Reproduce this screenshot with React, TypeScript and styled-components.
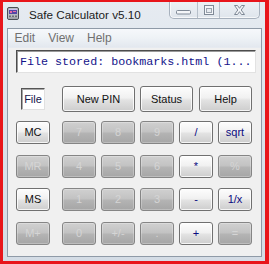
import React from "react";
import styled, { createGlobalStyle } from "styled-components";

const Global = createGlobalStyle`
  html, body { margin: 0; padding: 0; background: #ffffff; }
  body { width: 269px; height: 264px; overflow: hidden; }
`;

const Window = styled.div`
  width: 269px;
  height: 264px;
  box-sizing: border-box;
  background: #e8151b;
  padding: 2px 4px 3px 3px;
  display: flex;
`;

const Frame = styled.div`
  flex: 1;
  min-width: 0;
  display: flex;
  flex-direction: column;
  background: linear-gradient(180deg, #e6ebf1 0%, #dbe2ea 45%, #d4dce5 100%);
  padding: 0 3px 4px 4px;
`;

const TitleBar = styled.div`
  height: 26px;
  flex-shrink: 0;
  display: flex;
  align-items: flex-start;
`;

const AppIcon = styled.svg`
  margin-top: 5px;
  flex-shrink: 0;
`;

const Title = styled.div`
  margin: 5px 0 0 10px;
  font-family: "Liberation Sans", Arial, sans-serif;
  font-size: 11.7px;
  line-height: 15px;
  color: #1b1b1b;
  white-space: nowrap;
`;

const Caption = styled.div`
  margin-left: auto;
  margin-right: 2px;
  display: flex;
  height: 16px;
  border: 1px solid #a7b1bd;
  border-top: none;
  border-radius: 0 0 5px 5px;
  background: linear-gradient(180deg, #edf1f5 0%, #dfe5ec 100%);
  box-shadow: inset 1px 0 0 rgba(255, 255, 255, 0.7), inset 0 -1px 0 rgba(255, 255, 255, 0.7);
`;

const CapBtn = styled.div<{ $w: number; $pt?: number }>`
  width: ${(p) => p.$w}px;
  display: flex;
  align-items: center;
  justify-content: center;
  padding-top: ${(p) => p.$pt ?? 0}px;
  box-sizing: border-box;
  & + & {
    border-left: 1px solid #b7c0ca;
  }
`;

const Client = styled.div`
  flex: 1;
  display: flex;
  flex-direction: column;
  border: 1px solid #8f9aa7;
  background: #f0f0f0;
  min-height: 0;
`;

const MenuBar = styled.div`
  height: 18px;
  flex-shrink: 0;
  display: flex;
  background: linear-gradient(180deg, #f6f8fb 0%, #eef2f6 50%, #e3e8ef 100%);
  border-bottom: 1px solid #e6eaf0;
`;

const MenuItem = styled.div`
  padding: 0 6.5px;
  font-family: "Liberation Sans", Arial, sans-serif;
  font-size: 12px;
  line-height: 18px;
  color: #707070;
`;

const Content = styled.div`
  display: flex;
  flex-direction: column;
  padding: 2px 5px 0 8px;
`;

const Display = styled.div`
  height: 23px;
  box-sizing: border-box;
  background: #ffffff;
  border: 1px solid;
  border-color: #4c4c4c #e2e2e2 #e2e2e2 #4c4c4c;
  box-shadow: inset 1px 1px 0 #9a9a9a;
  padding: 2px 0 0 3px;
  font-family: "Liberation Mono", "Courier New", monospace;
  font-size: 11.7px;
  line-height: 19px;
  color: #13138a;
  white-space: nowrap;
  overflow: hidden;
`;

const TopRow = styled.div`
  width: 236px;
  height: 26px;
  margin-top: 13px;
  display: flex;
  align-items: center;
`;

const FileCell = styled.div`
  width: 34px;
  display: flex;
  justify-content: center;
`;

const FileBox = styled.div`
  width: 24px;
  height: 22px;
  box-sizing: border-box;
  background: #ffffff;
  border: 1px solid;
  border-color: #555555 #e0e0e0 #e0e0e0 #555555;
  box-shadow: inset 1px 1px 0 #a8a8a8;
  font-family: "Liberation Sans", Arial, sans-serif;
  font-size: 11px;
  line-height: 20px;
  text-align: center;
  color: #15154a;
`;

type Variant = "normal" | "accent" | "off";

const Key = styled.button<{ $variant: Variant; $w?: number; $ml?: number; $h?: number }>`
  width: ${(p) => p.$w ?? 34}px;
  height: ${(p) => p.$h ?? 23}px;
  margin: 0 0 0 ${(p) => p.$ml ?? 0}px;
  padding: 0;
  box-sizing: border-box;
  border-radius: 3px;
  font-family: "Liberation Sans", Arial, sans-serif;
  font-size: 11px;
  line-height: 1;
  display: flex;
  align-items: center;
  justify-content: center;
  border: 1px solid ${(p) => (p.$variant === "off" ? "#858585" : "#707070")};
  background: ${(p) =>
    p.$variant === "off"
      ? "linear-gradient(180deg, #d0d0d0 0%, #c3c3c3 45%, #b3b3b3 55%, #a6a6a6 100%)"
      : "linear-gradient(180deg, #fdfdfd 0%, #f1f1f1 45%, #e2e2e2 55%, #cdcdcd 100%)"};
  box-shadow: inset 0 0 0 1px ${(p) => (p.$variant === "off" ? "rgba(255,255,255,0.25)" : "rgba(255,255,255,0.8)")};
  color: ${(p) => (p.$variant === "off" ? "#d5d5d5" : p.$variant === "accent" ? "#0a0a80" : "#111111")};
`;

const Keypad = styled.div`
  margin-top: 9px;
  display: flex;
  gap: 12px;
`;

const MemoryColumn = styled.div`
  display: grid;
  grid-template-rows: repeat(4, 23px);
  row-gap: 10.5px;
`;

const KeyGrid = styled.div`
  display: grid;
  grid-template-columns: repeat(5, 34px);
  grid-template-rows: repeat(4, 23px);
  column-gap: 5px;
  row-gap: 10.5px;
`;

const memory: [string, Variant][] = [
  ["MC", "normal"],
  ["MR", "off"],
  ["MS", "normal"],
  ["M+", "off"],
];

const keys: [string, Variant][] = [
  ["7", "off"], ["8", "off"], ["9", "off"], ["/", "accent"], ["sqrt", "accent"],
  ["4", "off"], ["5", "off"], ["6", "off"], ["*", "accent"], ["%", "off"],
  ["1", "off"], ["2", "off"], ["3", "off"], ["-", "accent"], ["1/x", "accent"],
  ["0", "off"], ["+/-", "off"], [".", "off"], ["+", "accent"], ["=", "off"],
];

export default function App() {
  return (
    <>
      <Global />
      <Window>
        <Frame>
          <TitleBar>
            <AppIcon width="12" height="13" viewBox="0 0 12 13">
              <rect x="0.5" y="0.5" width="11" height="12" rx="1.5" fill="#b8bbc1" stroke="#4b4e56" />
              <rect x="2" y="2" width="8" height="5" fill="#5546a6" />
              <rect x="2" y="2" width="8" height="1" fill="#cbbef2" />
              <rect x="3" y="4" width="2" height="2" fill="#e46aa4" />
              <rect x="6" y="4" width="3" height="1" fill="#e46aa4" />
              <rect x="2" y="8.5" width="2" height="1.5" fill="#6d6f78" />
              <rect x="5" y="8.5" width="2" height="1.5" fill="#6d6f78" />
              <rect x="8" y="8.5" width="2" height="1.5" fill="#6d6f78" />
              <rect x="2" y="10.5" width="8" height="1" fill="#8b8e96" />
            </AppIcon>
            <Title>Safe Calculator v5.10</Title>
            <Caption>
              <CapBtn $w={27} $pt={5}>
                <svg width="15" height="5" viewBox="0 0 15 5">
                  <rect x="0.5" y="0.5" width="14" height="3.5" rx="1" fill="#f4f6f9" stroke="#7f8996" />
                </svg>
              </CapBtn>
              <CapBtn $w={22}>
                <svg width="10" height="10" viewBox="0 0 10 10">
                  <rect x="0.5" y="0.5" width="9" height="9" fill="#f4f6f9" stroke="#7f8996" />
                  <rect x="2.5" y="3.5" width="5" height="4" fill="#e6eaef" stroke="#9aa3ae" />
                </svg>
              </CapBtn>
              <CapBtn $w={40}>
                <svg width="11" height="10" viewBox="0 0 11 10">
                  <polygon
                    points="0.5,0.5 3.5,0.5 5.5,3.3 7.5,0.5 10.5,0.5 7.2,5 10.5,9.5 7.5,9.5 5.5,6.7 3.5,9.5 0.5,9.5 3.8,5"
                    fill="#f4f6f9"
                    stroke="#7f8996"
                  />
                </svg>
              </CapBtn>
            </Caption>
          </TitleBar>
          <Client>
            <MenuBar>
              <MenuItem>Edit</MenuItem>
              <MenuItem>View</MenuItem>
              <MenuItem>Help</MenuItem>
            </MenuBar>
            <Content>
              <Display>File stored: bookmarks.html (1...</Display>
              <TopRow>
                <FileCell>
                  <FileBox>File</FileBox>
                </FileCell>
                <Key $variant="normal" $w={73} $h={26} $ml={12}>New PIN</Key>
                <Key $variant="normal" $w={53} $h={26} $ml={5}>Status</Key>
                <Key $variant="normal" $w={53} $h={26} $ml={6}>Help</Key>
              </TopRow>
              <Keypad>
                <MemoryColumn>
                  {memory.map(([label, v]) => (
                    <Key key={label} $variant={v}>{label}</Key>
                  ))}
                </MemoryColumn>
                <KeyGrid>
                  {keys.map(([label, v]) => (
                    <Key key={label} $variant={v}>{label}</Key>
                  ))}
                </KeyGrid>
              </Keypad>
            </Content>
          </Client>
        </Frame>
      </Window>
    </>
  );
}
